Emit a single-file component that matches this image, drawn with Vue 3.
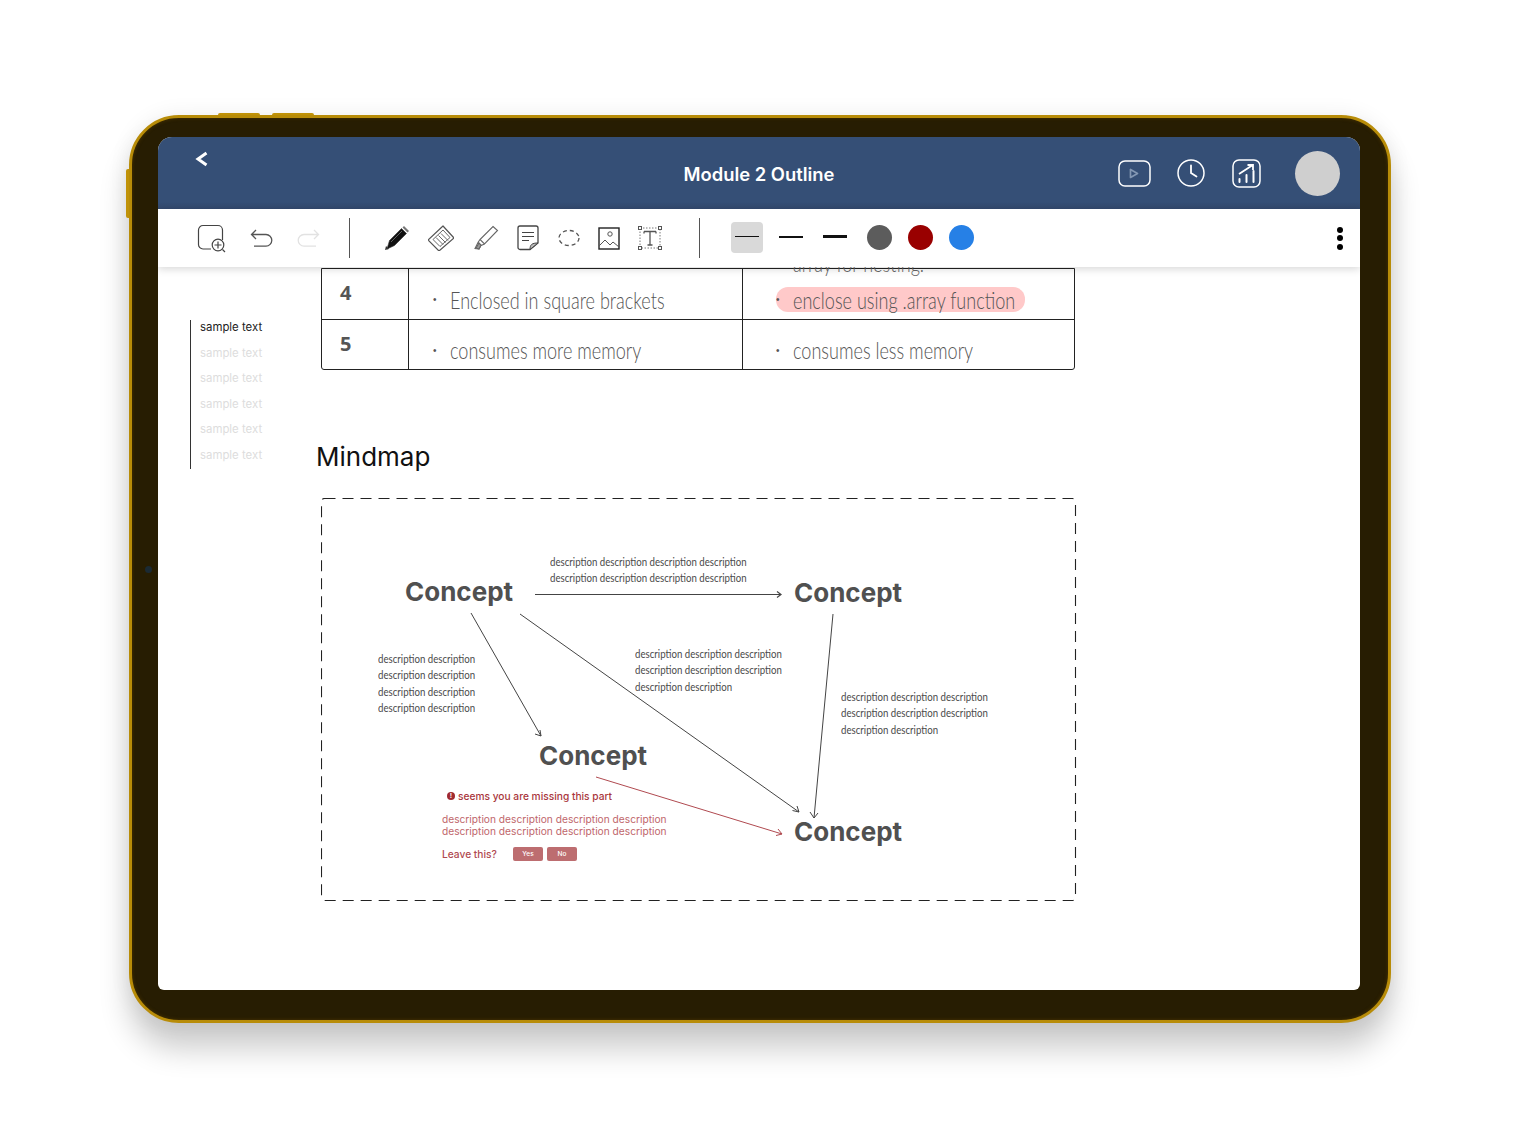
<script setup>
const sideItems = ['sample text','sample text','sample text','sample text','sample text','sample text']
const d4 = 'description description description description'
const d3 = 'description description description'
const d2 = 'description description'
const rows = [
  { n: '4', a: 'Enclosed in square brackets', b: 'enclose using .array function', hl: true },
  { n: '5', a: 'consumes more memory', b: 'consumes less memory', hl: false }
]
const notes = [
  { cls: 'n-top', lines: [d4, d4] },
  { cls: 'n-left', lines: [d2, d2, d2, d2] },
  { cls: 'n-mid', lines: [d3, d3, d2] },
  { cls: 'n-right', lines: [d3, d3, d2] }
]
const concepts = ['c1', 'c2', 'c3', 'c4']
</script>

<template>
  <div class="page">
    <div class="device">
      <i class="btn-top b1"></i><i class="btn-top b2"></i><i class="btn-side"></i>
      <i class="camera"></i>
      <div class="screen">
        <header class="head">
          <div class="head-left">
            <svg class="back" width="14" height="16" viewBox="0 0 14 16"><path d="M11.500 2 3 8l8.500 6" fill="none" stroke="#fff" stroke-width="3"/></svg>
          </div>
          <h1 class="title">Module 2 Outline</h1>
          <div class="head-right">
            <svg class="ico-play" width="33" height="27" viewBox="0 0 33 27" fill="none"><rect x="1" y="1" width="31" height="25" rx="6" stroke="#fff" stroke-width="1.500"/><path d="M12.500 9.500v8l7-4z" stroke="#8397b3" stroke-width="1.700" stroke-linejoin="round"/></svg>
            <svg width="28" height="28" viewBox="0 0 28 28" fill="none"><circle cx="14" cy="14" r="13" stroke="#fff" stroke-width="1.500"/><path d="M14 6.500V14l5.500 3.500" stroke="#fff" stroke-width="1.800" stroke-linecap="round"/></svg>
            <svg width="29" height="29" viewBox="0 0 29 29" fill="none"><rect x="1" y="1" width="27" height="27" rx="6" stroke="#fff" stroke-width="1.500"/><path d="M7 15 20 6.500M15.500 6h5.500v5" stroke="#fff" stroke-width="1.800"/><path d="M7.500 23v-3M14.500 23v-7M21.500 23V12" stroke="#fff" stroke-width="2" stroke-linecap="round"/></svg>
            <div class="avatar"></div>
          </div>
        </header>

        <div class="tools">
          <div class="tool-group g-first">
            <svg width="29" height="29" viewBox="0 0 29 29" fill="none"><path d="M14 25H6a4.500 4.500 0 0 1-4.500-4.500V6A4.500 4.500 0 0 1 6 1.500h15A4.500 4.500 0 0 1 25.500 6v10" stroke="#444" stroke-width="1.200"/><circle cx="21" cy="21" r="5.800" stroke="#444" stroke-width="1.200"/><path d="M21 17.500v7M17.500 21h7M25.500 25.500l2.500 2.500" stroke="#444" stroke-width="1.200"/></svg>
            <svg width="23" height="19" viewBox="0 0 23 19" fill="none"><path d="M6 1 1.500 5.500 6 10M1.500 5.500H16a5.800 5.800 0 0 1 0 11.600H4" stroke="#555" stroke-width="1.300"/></svg>
            <svg width="23" height="19" viewBox="0 0 23 19" fill="none"><path d="M17 1l4.500 4.500L17 10M21.500 5.500H7a5.800 5.800 0 0 0 0 11.600h12" stroke="#e2e2e2" stroke-width="1.300"/></svg>
          </div>
          <i class="divider d1"></i>
          <div class="tool-group g-pens">
            <svg width="26" height="26" viewBox="0 0 26 26"><path d="M5.500 15.500 17.500 3.500l5 5-12 12L3 24z" fill="#111" stroke="#333" stroke-width=".6"/><path d="M18.500 2.500l1.500-1.500 5 5-1.500 1.500z" fill="#777"/><path d="M7 17 18 6" stroke="#777" stroke-width=".8"/><path d="M1 25l1-4 3 3z" fill="#333"/></svg>
            <svg width="26" height="26" viewBox="0 0 26 26" fill="none" stroke="#555"><path d="M15 1l11 12-15 13L0 15z" stroke-width="1.200" stroke-linejoin="round"/><path d="M15 5l7 7.500-10 9-7-7z" stroke-width=".9"/><path d="m8 12.500 7 7M10.500 10.500l7 7M13 8.500l7 7" stroke-width=".9"/></svg>
            <svg width="27" height="26" viewBox="0 0 27 26" fill="none" stroke="#666" stroke-width="1.100"><path d="M21 1.500 25.500 5.500 12.500 19 8 14.500zM8 14.500l-2 3 3 3 3.500-1.500M6 17.500 3 23.500l4 .5 2-3.500"/><path d="M4 23l3-5 2 2-2 4z" fill="#999"/></svg>
            <svg width="22" height="26" viewBox="0 0 22 26" fill="none" stroke="#444"><path d="M13 24.500H3a2 2 0 0 1-2-2V3a2 2 0 0 1 2-2h16a2 2 0 0 1 2 2v15z" stroke-width="1.300"/><path d="M5 7.500h12M5 11.500h12M5 15.500h7" stroke-width="1.100"/><path d="M13 24.500c0-5 2-6.500 8-6.500z" fill="#bbb" stroke-width="1"/></svg>
            <svg class="lasso" width="22" height="26" viewBox="0 0 22 26" fill="none"><ellipse cx="11" cy="13" rx="10" ry="7.500" stroke="#555" stroke-width="1.300" stroke-dasharray="4 3"/></svg>
            <svg width="22" height="26" viewBox="0 0 22 26" fill="none" stroke="#222"><rect x="1" y="3" width="20" height="21" stroke-width="1.400"/><circle cx="12" cy="9" r="2.200" stroke-width="1" stroke="#555"/><path d="m1 21 6-6 5 5 3-3 6 5" stroke-width="1" stroke="#555"/></svg>
            <svg width="24" height="26" viewBox="0 0 24 26" fill="none" stroke="#555"><rect x="2" y="3" width="20" height="20" stroke-width=".8" stroke-dasharray="1.500 1.500"/><path d="M6 6.500h12M6 6.500v2M18 6.500v2M12 6.500V20M9.500 20h5" stroke-width="1.300"/><g fill="#fff" stroke-width="1"><rect x=".5" y="1.500" width="3" height="3"/><rect x="20.500" y="1.500" width="3" height="3"/><rect x=".5" y="21.500" width="3" height="3"/><rect x="20.500" y="21.500" width="3" height="3"/></g></svg>
          </div>
          <i class="divider d2"></i>
          <div class="strokes">
            <div class="stroke selected"><i class="s1"></i></div>
            <div class="stroke"><i class="s2"></i></div>
            <div class="stroke"><i class="s3"></i></div>
          </div>
          <div class="colors">
            <i class="dot gray"></i><i class="dot red"></i><i class="dot blue"></i>
          </div>
          <div class="more"><i></i><i></i><i></i></div>
        </div>

        <div class="content">
          <nav class="side">
            <div v-for="(s, i) in sideItems" :key="i" class="side-item" :class="{ on: i === 0 }">{{ s }}</div>
          </nav>
          <main class="main">
            <div class="table">
              <div v-for="r in rows" :key="r.n" class="row">
                <div class="cell num">{{ r.n }}</div>
                <div class="cell"><span class="bullet">•</span><span class="hand">{{ r.a }}</span></div>
                <div class="cell">
                  <span v-if="r.hl" class="peek hand">array for nesting.</span>
                  <div class="mark" :class="{ hl: r.hl }"><span class="bullet">•</span><span class="hand">{{ r.b }}</span></div>
                </div>
              </div>
            </div>
            <h2 class="map-title">Mindmap</h2>
            <div class="canvas">
              <svg class="wires" width="756" height="404" viewBox="0 0 756 404" fill="none">
                <rect x=".5" y=".5" width="754" height="402" rx="3" stroke="#222" stroke-width="1.100" stroke-dasharray="11 7"/>
                <g stroke="#444" stroke-width="1">
                  <path d="M214 96.500H460M456 93.500l4 3-4 3" stroke-width="1.200"/>
                  <path d="M150 115l70 123M219 232l1 6-6-2"/>
                  <path d="M199 116l279 198M471.500 312.500l6.500 1.500-2-6"/>
                  <path d="M512 116l-19 204M489 314l4 6 4-5"/>
                </g>
                <path d="M275 279l186 57M455 337.500l6-1.500-4-5" stroke="#b04a50" stroke-width="1"/>
              </svg>
              <div v-for="c in concepts" :key="c" class="concept" :class="c">Concept</div>
              <div v-for="n in notes" :key="n.cls" class="note" :class="n.cls">
                <div v-for="(l, i) in n.lines" :key="i">{{ l }}</div>
              </div>
              <div class="warn">
                <div class="warn-head"><i class="warn-ico">!</i>seems you are missing this part</div>
                <div class="warn-desc">{{ d4 }}<br>{{ d4 }}</div>
                <div class="warn-ask">
                  <span class="leave">Leave this?</span>
                  <span class="act">Yes</span><span class="act">No</span>
                </div>
              </div>
            </div>
          </main>
        </div>
      </div>
    </div>
  </div>
</template>

<style>
html, body { margin: 0; background: #fff; }
</style>

<style scoped>
.page { width: 1518px; height: 1136px; padding: 115px 0 0 129px; box-sizing: border-box; overflow: hidden; font-family: Inter, "Liberation Sans", sans-serif; }
.device { position: relative; width: 1262px; height: 908px; box-sizing: border-box; padding: 19px 28px 30px 26px; border: 3px solid #b88c08; border-radius: 50px; background: #271d02; box-shadow: inset 0 0 3px 1px rgba(70,50,0,.7), 0 26px 30px rgba(0,0,0,.2), 0 0 22px rgba(0,0,0,.07); }
.btn-top { position: absolute; top: -5.500px; height: 2.500px; width: 42px; background: #c09208; border-radius: 2px 2px 0 0; }
.b1 { left: 86px; }
.b2 { left: 140px; }
.btn-side { position: absolute; left: -6.500px; top: 51px; width: 3.500px; height: 49px; background: #c09208; border-radius: 2px 0 0 2px; }
.camera { position: absolute; left: 13px; top: 448px; width: 7px; height: 7px; border-radius: 50%; background: #1b2a33; }
.screen { display: flex; flex-direction: column; width: 1202px; height: 853px; background: #fff; border-radius: 14px 14px 6px 6px; overflow: hidden; }
.head { flex: none; display: grid; grid-template-columns: minmax(0, 1fr) auto minmax(0, 1fr); align-items: center; height: 72px; padding: 0 20px; background: linear-gradient(#354f76 90%, #33496d); }
.head-left { align-self: start; padding: 14px 0 0 17px; }
.back { display: block; }
.title { margin: 0; padding-top: 1px; color: #fff; font: 600 18.400px Inter, sans-serif; }
.head-right { display: flex; align-items: center; justify-content: flex-end; gap: 27px; }
.head-right svg { display: block; }
.ico-play { margin-right: -1px; }
.avatar { flex: none; width: 45px; height: 45px; margin-left: 7px; border-radius: 50%; background: #cfcfcf; }

.tools { position: relative; z-index: 2; flex: none; display: flex; align-items: center; height: 58px; padding: 0 17px 0 39px; background: #fff; box-shadow: 0 2px 8px rgba(0,0,0,.16); }
.tools svg { display: block; }
.tool-group { display: flex; align-items: center; }
.g-first { gap: 24px; }
.g-pens { gap: 18px; }
.lasso { margin-left: 1px; }
.divider { flex: none; width: 1px; height: 40px; background: #555; }
.d1 { margin: 0 34px 0 29px; }
.d2 { margin: 0 31px 0 37px; }
.strokes { display: flex; align-items: center; gap: 16px; margin-top: -2px; }
.stroke { display: flex; align-items: center; justify-content: center; width: 24px; height: 31px; border-radius: 4px; }
.stroke:last-child { margin-left: 4px; }
.selected { width: 32px; background: #d9d9d9; }
.stroke i { display: block; width: 24px; background: #111; margin-top: -1px; }
.s1 { height: 1px; }
.s2 { height: 2px; }
.s3 { height: 3px; }
.colors { display: flex; gap: 16px; margin: -2px 0 0 20px; }
.dot { display: block; width: 25px; height: 25px; border-radius: 50%; }
.gray { background: #5c5c5c; }
.red { background: #990000; }
.blue { background: #2680e6; }
.more { display: flex; flex-direction: column; gap: 2.500px; margin-left: auto; }
.more i { display: block; width: 6px; height: 6px; border-radius: 50%; background: #000; }

.content { flex: 1; min-height: 0; display: flex; overflow: hidden; }
.side { flex: none; align-self: flex-start; width: 100px; margin: 53px 31px 0 32px; padding: 0 0 0 9px; box-sizing: border-box; border-left: 1px solid #333; height: 149px; }
.side-item { height: 25.500px; font-size: 11.400px; line-height: 15px; color: #ddd; white-space: nowrap; }
.on { color: #222; }
.main { flex: none; width: 756px; }
.table { width: 754px; margin-top: 1px; border: 1px solid #222; border-radius: 0 0 3px 3px; box-sizing: border-box; }
.row { display: grid; grid-template-columns: 86px 334px 1fr; height: 50px; box-sizing: border-box; }
.row + .row { border-top: 1px solid #222; }
.cell { position: relative; display: flex; align-items: center; padding: 11px 0 0 24px; box-sizing: border-box; border-left: 1px solid #222; color: #555; white-space: nowrap; }
.cell.num { border-left: 0; padding: 0 0 0 18px; align-items: flex-start; font: 700 20px/48px "Open Sans", sans-serif; }
.bullet { flex: none; width: 17px; font-size: 10px; font-family: "Liberation Sans", sans-serif; }
.hand { display: inline-block; font: 300 23px/26px Lato, sans-serif; transform: scaleX(.785); transform-origin: left center; }
.peek { position: absolute; left: 50px; top: -19px; color: #666; }
.mark { flex: none; display: flex; align-items: center; width: 249px; height: 25px; margin: 0 0 0 9px; border-radius: 12px; box-sizing: border-box; }
.hl { background: #ffc9c9; }
.map-title { margin: 69px 0 0 -5px; font: 400 26px/36px Inter, sans-serif; color: #111; }
.canvas { position: relative; width: 756px; height: 404px; margin-top: 23px; }
.wires { position: absolute; left: 0; top: 0; }
.concept { position: absolute; font: 700 26px/30px Inter, sans-serif; color: #505050; white-space: nowrap; }
.c1 { left: 84px; top: 79px; }
.c2 { left: 473px; top: 80px; }
.c3 { left: 218px; top: 243px; }
.c4 { left: 473px; top: 319px; }
.note { position: absolute; font: 400 12px/16.300px Lato, sans-serif; color: #4a4a4a; white-space: nowrap; transform: scaleX(.805); transform-origin: left top; }
.n-top { left: 229px; top: 56px; }
.n-left { left: 57px; top: 153px; }
.n-mid { left: 314px; top: 148px; }
.n-right { left: 520px; top: 191px; }
.warn { position: absolute; left: 121px; top: 291px; width: 240px; color: #b04a50; font-weight: 500; white-space: nowrap; }
.warn-head { display: flex; align-items: center; gap: 3px; margin-left: 5px; font-size: 10.200px; line-height: 14px; color: #a9363c; }
.warn-ico { display: block; width: 8px; height: 8px; border-radius: 50%; background: #a02a30; color: #fff; font: 700 7px/8px "Liberation Sans", sans-serif; text-align: center; }
.warn-desc { margin-top: 10px; font-size: 10.200px; font-weight: 400; line-height: 12.300px; color: #c0666b; }
.warn-ask { display: flex; align-items: center; margin-top: 9px; }
.leave { width: 71px; font-size: 10.200px; }
.act { width: 30px; height: 14px; margin-right: 4px; border-radius: 2px; background: #bd6d70; color: #fff; font-size: 6.500px; line-height: 14px; text-align: center; }
</style>
